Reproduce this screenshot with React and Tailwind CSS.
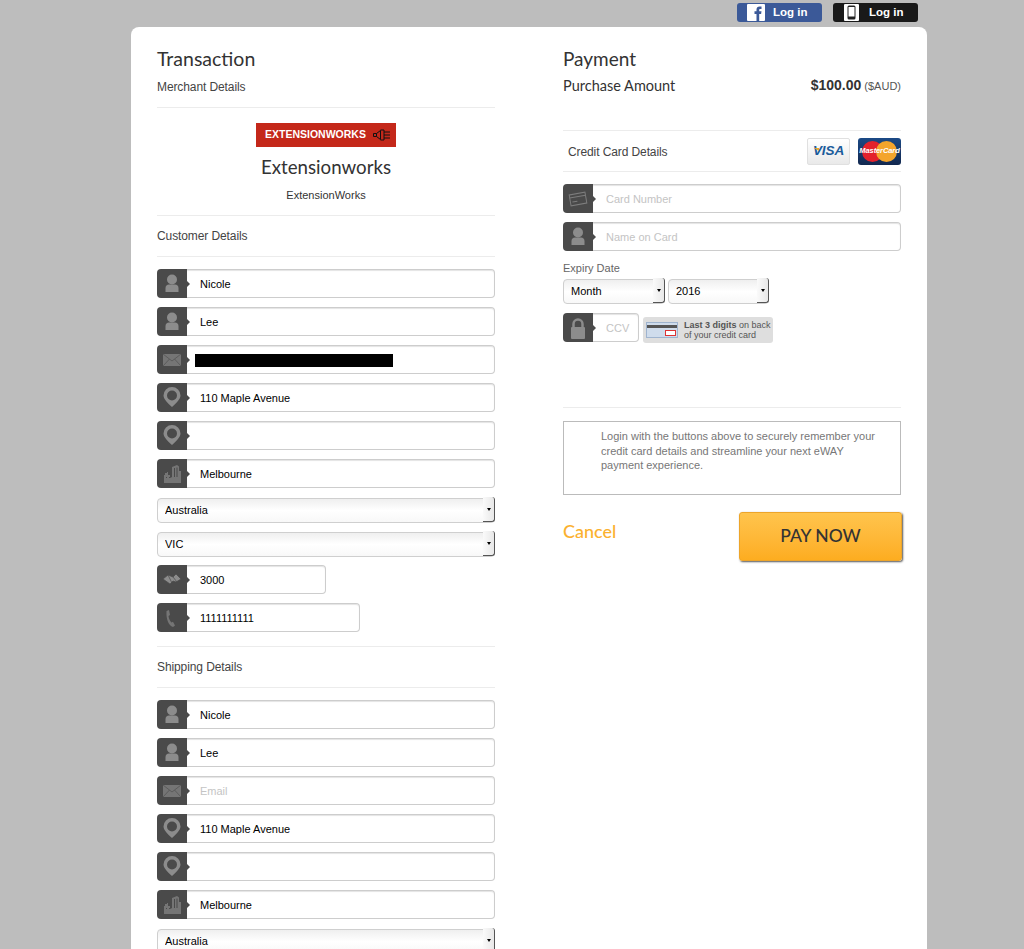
import React from 'react';

const sans = "font-['Liberation_Sans',Arial,sans-serif]";
const head = "font-['Lato',sans-serif]";

const icons = {
  user: (
    <>
      <circle cx="15" cy="10.5" r="5" fill="#8c8c8c" />
      <path d="M8.500 23v-4c0-2 1.500-3.500 3.500-3.500h6c2 0 3.500 1.500 3.500 3.500v4z" fill="#8c8c8c" />
    </>
  ),
  mail: (
    <>
      <rect x="6" y="9" width="18" height="12" fill="#757575" />
      <path d="M6 9l9 7 9-7M6 21l6.500-7M24 21l-6.500-7" fill="none" stroke="#555" strokeWidth="0.8" />
    </>
  ),
  pin: (
    <path
      fillRule="evenodd"
      d="M15 4a8.500 8.500 0 0 1 8.500 8.500c0 3.500-4 7.500-8.500 11.500-4.500-4-8.500-8-8.500-11.500A8.500 8.500 0 0 1 15 4zm0 3.500a5 5 0 1 0 0 10 5 5 0 0 0 0-10z"
      fill="#8c8c8c"
    />
  ),
  city: (
    <path
      d="M7 24v-8h1v-2h2v-1h1v3h2v3l2-1V8l5-2 2 1.500V12h2v12zM12 18h1v1h-1zM9 18h1v1H9zM17 9h1v9h-1zM19.500 8.500h1V18h-1z"
      fillRule="evenodd"
      fill="#757575"
    />
  ),
  map: (
    <path d="M6 14l5-4 5 2 3-3 5 5-5 3-3-1-3 3z M11 10l4 8 M16 12l4 5" fill="#8c8c8c" stroke="#4a4a4a" strokeWidth="0.7" />
  ),
  phone: (
    <path
      d="M9.500 8l2.500-1 1 5-1.500 1c.3 3 1.500 5 3 6.500l1.500-.8 2 3.800-2 1.500c-4.500-1.500-7-8-6.500-16z"
      fill="#757575"
    />
  ),
  card: (
    <g fill="none" stroke="#7d7d7d" strokeWidth="1" transform="rotate(-10 15 15)">
      <rect x="7" y="9.500" width="16" height="11" />
      <path d="M7 12.500h16M9 17h5" />
    </g>
  ),
  lock: (
    <>
      <path d="M10.500 15v-4a4.500 4.500 0 0 1 9 0v4" fill="none" stroke="#8c8c8c" strokeWidth="2.500" />
      <rect x="8" y="14" width="14" height="12" rx="1" fill="#8c8c8c" />
    </>
  ),
};

const Field = ({ icon, value, placeholder, width = 'w-full', mb = 'mb-[9px]' }) => (
  <div className={`flex h-[29px] ${width} ${mb}`}>
    <div className="relative h-[29px] w-[30px] shrink-0 rounded-l-[4px] bg-[#4a4a4a]">
      <svg viewBox="0 0 30 29" className="h-[29px] w-[30px]">
        {icons[icon]}
      </svg>
      <div className="absolute left-[30px] top-[12px] h-0 w-0 border-y-[3px] border-l-[3px] border-y-transparent border-l-[#4a4a4a]" />
    </div>
    <input
      readOnly
      defaultValue={value}
      placeholder={placeholder}
      className="h-[29px] min-w-0 flex-1 rounded-r-[4px] border border-l-0 border-[#cdcdcd] bg-white pl-[13px] text-[11px] text-black outline-none shadow-[inset_0_1px_1px_#e4e4e4] placeholder:text-[#c4c4c4]"
    />
  </div>
);

const Select = ({ label, width = 'w-full', mb = 'mb-[9px]' }) => (
  <div className={`relative h-[25px] ${width} ${mb}`}>
    <select
      defaultValue={label}
      className="h-[25px] w-full appearance-none rounded-[4px] border border-[#cfcfcf] bg-gradient-to-b from-[#efefef] via-white to-[#f8f8f8] pl-[7px] text-[11px] text-black outline-none"
    >
      <option>{label}</option>
    </select>
    <div className="absolute right-0 top-0 flex h-[25px] w-[12px] items-center justify-center rounded-r-[3px] border-b-[1.5px] border-r-[1.5px] border-[#555] bg-gradient-to-r from-[#fafafa] to-[#e8e8e8]">
      <div className="h-0 w-0 border-x-[2.5px] border-t-[3px] border-x-transparent border-t-black" />
    </div>
  </div>
);

const SectionHead = ({ children }) => (
  <div className="flex h-[42px] items-center border-y border-[#ececec] text-[12px] tracking-[-0.1px] text-[#444]">{children}</div>
);

const AddressFields = ({ email, emailBlocked }) => (
  <>
    <Field icon="user" value="Nicole" />
    <Field icon="user" value="Lee" />
    <div className="relative">
      <Field icon="mail" placeholder="Email" value={email} />
      {emailBlocked && <div className="absolute left-[38px] top-[9px] h-[13px] w-[198px] bg-black" />}
    </div>
    <Field icon="pin" value="110 Maple Avenue" />
    <Field icon="pin" />
    <Field icon="city" value="Melbourne" />
    <Select label="Australia" />
  </>
);

const LoginButton = ({ bg, icon }) => (
  <div className={`flex h-[19px] w-[85px] items-center rounded-[3px] ${bg}`}>
    <div className="ml-[10px] flex h-[17px] w-[18px] items-center justify-center">{icon}</div>
    <span className={`${sans} ml-[8px] text-[11.5px] font-bold text-white`}>Log in</span>
  </div>
);

export default function App() {
  return (
    <div className={`${sans} h-[949px] overflow-hidden bg-[#bdbdbd]`}>
      <div className="flex h-[27px] justify-end gap-[11px] pr-[106px] pt-[3px]">
        <LoginButton
          bg="bg-[#3b5998]"
          icon={
            <svg viewBox="0 0 18 17" className="h-[17px] w-[18px]">
              <rect width="18" height="17" rx="1" fill="#fff" />
              <path d="M9.500 17v-7H7.500V7.300h2V5.500C9.500 3.500 10.700 2.500 12.500 2.500h2v2.600h-1.300c-.8 0-1 .4-1 1.100v1.100h2.300L14.100 10h-1.900v7z" fill="#3b5998" />
            </svg>
          }
        />
        <LoginButton
          bg="bg-[#191919]"
          icon={
            <svg viewBox="0 0 18 17" className="h-[17px] w-[18px]">
              <rect x="1" width="15" height="17" rx="1" fill="#fff" />
              <rect x="4.500" y="1.500" width="8" height="14" rx="1.500" fill="#222" />
              <rect x="5.500" y="3" width="6" height="9.500" fill="#fff" />
            </svg>
          }
        />
      </div>

      <div className="ml-[131px] flex w-[796px] gap-[68px] rounded-t-[8px] bg-white px-[26px] pt-[20px]">
        {/* transaction column */}
        <div className="w-[338px] shrink-0">
          <h2 className={`${head} flex h-[24px] items-center text-[19.5px] text-[#333]`}>Transaction</h2>
          <div className="flex h-[37px] items-center border-b border-[#ececec] pb-[4px] text-[12px] tracking-[-0.1px] text-[#444]">
            Merchant Details
          </div>
          <div className="flex h-[107px] flex-col items-center pt-[15px]">
            <div className="flex h-[24px] w-[140px] items-center gap-[7px] bg-[#c4281a] pl-[9px]">
              <span className="text-[10.5px] font-bold text-white">EXTENSIONWORKS</span>
              <svg viewBox="0 0 18 14" className="h-[14px] w-[18px]" fill="none" stroke="#111" strokeWidth="1">
                <path d="M0.500 5.500h3v3h-3zM3.500 5.500l4-3v9l-4-3" />
                <path d="M7.500 2h3.500v10H7.500M11 4h6M11 7h6M11 10h6" />
              </svg>
            </div>
            <div className={`${head} flex h-[40px] items-center text-[18.7px] text-[#333]`}>Extensionworks</div>
            <div className="flex h-[16px] items-center text-[11px] text-[#333]">ExtensionWorks</div>
          </div>
          <SectionHead>Customer Details</SectionHead>
          <div className="pt-[12px]">
            <AddressFields emailBlocked />
            <Select label="VIC" />
            <Field icon="map" value="3000" width="w-[169px]" />
            <Field icon="phone" value="1111111111" width="w-[203px]" mb="mb-[14px]" />
          </div>
          <SectionHead>Shipping Details</SectionHead>
          <div className="pt-[12px]">
            <AddressFields />
          </div>
        </div>

        {/* payment column */}
        <div className="w-[338px] shrink-0">
          <h2 className={`${head} flex h-[24px] items-center text-[19px] text-[#333]`}>Payment</h2>
          <div className="flex h-[29px] items-center justify-between">
            <span className={`${head} text-[14.500px] text-[#333]`}>Purchase Amount</span>
            <span className="flex items-baseline gap-[3px] text-[#333]">
              <span className="text-[14px] font-bold">$100.00</span>
              <span className="text-[11px] text-[#555]">($AUD)</span>
            </span>
          </div>
          <div className="mt-[30px]">
            <SectionHead>
              <div className="flex w-full items-center justify-between pl-[5px]">
                <span className="pt-[1px]">Credit Card Details</span>
                <div className="flex gap-[8px]">
                  <div className="relative flex h-[27px] w-[43px] items-center justify-center rounded-[2px] border border-[#e0e0e0] bg-gradient-to-b from-white to-[#e9e9e9]">
                    <div className="absolute left-[6px] top-[9px] h-0 w-0 border-l-[5px] border-t-[3px] border-l-transparent border-t-[#e8a92c]" />
                    <span className="text-[13.500px] font-bold italic text-[#1b5c9b]">VISA</span>
                  </div>
                  <div className="relative flex h-[27px] w-[43px] items-center justify-center rounded-[3px] bg-gradient-to-b from-[#1b4a86] to-[#12284f]">
                    <div className="h-[21px] w-[21px] rounded-full bg-[#e3222c]" />
                    <div className="-ml-[7px] h-[21px] w-[21px] rounded-full bg-[#f4a52c]" />
                    <span className="absolute text-[7.500px] font-bold italic text-white">MasterCard</span>
                  </div>
                </div>
              </div>
            </SectionHead>
          </div>
          <div className="pt-[12px]">
            <Field icon="card" placeholder="Card Number" />
            <Field icon="user" placeholder="Name on Card" />
          </div>
          <div className="flex h-[16px] items-center text-[11px] text-[#666]">Expiry Date</div>
          <div className="mt-[2px] flex gap-[3px]">
            <Select label="Month" width="w-[102px]" mb="mb-0" />
            <Select label="2016" width="w-[101px]" mb="mb-0" />
          </div>
          <div className="mt-[10px] flex gap-[4px]">
            <Field icon="lock" placeholder="CCV" width="w-[76px]" mb="mb-0" />
            <div className="mt-[4px] flex h-[26px] w-[130px] items-center gap-[6px] rounded-[3px] bg-[#dedede] pl-[3px]">
              <div className="h-[16px] w-[32px] shrink-0 border border-[#9fb4cf] bg-[#cfdcec]">
                <div className="mt-[2px] h-[3px] bg-[#555]" />
                <div className="ml-auto mr-[1px] mt-[2px] h-[6px] w-[11px] border border-[#d33] bg-white" />
              </div>
              <div className="text-[9px] leading-[10px] text-[#555]">
                <b>Last 3 digits</b> on back
                <br />
                of your credit card
              </div>
            </div>
          </div>
          <div className="mt-[64px] border-t border-[#ececec]" />
          <div className="mt-[13px] h-[74px] border border-[#bbb] pl-[37px] pt-[7px] text-[11px] leading-[14.500px] text-[#777]">
            Login with the buttons above to securely remember your
            <br />
            credit card details and streamline your next eWAY
            <br />
            payment experience.
          </div>
          <div className="mt-[17px] flex items-center justify-between">
            <span className={`${head} pb-[11px] text-[18px] font-medium text-[#fbb12f]`}>Cancel</span>
            <div className={`${head} -mr-[1px] flex h-[49px] w-[163px] items-center justify-center rounded-[3px] border border-[#eda52a] bg-gradient-to-b from-[#ffc44c] to-[#fdad1f] text-[17.500px] font-medium text-[#333] shadow-[1px_1px_2px_#555]`}>
              PAY NOW
            </div>
          </div>
        </div>
      </div>
    </div>
  );
}
